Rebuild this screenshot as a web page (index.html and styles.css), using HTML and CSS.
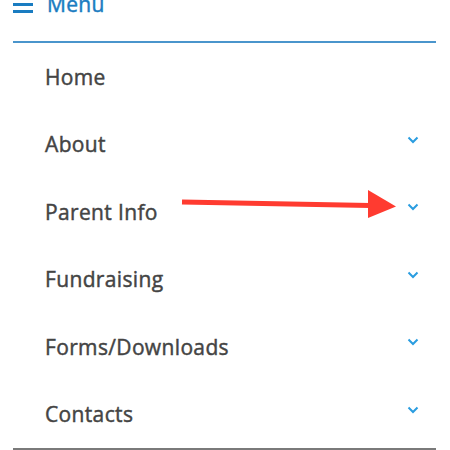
FILE: index.html
```html
<!DOCTYPE html>
<html>
<head>
<meta charset="utf-8">
<link rel="stylesheet" href="styles.css">
</head>
<body>
<nav class="nav">
  <div class="menu-head">
    <span class="burger"><span></span><span></span><span></span></span>
    <span class="menu-label">Menu</span>
  </div>
  <ul class="menu-list">
    <li class="item"><span class="label">Home</span></li>
    <li class="item"><span class="label">About</span><span class="chev"><svg width="12" height="8" viewBox="0 0 12 8"><path d="M1.5 1.5 L6 6 L10.5 1.5" fill="none" stroke="#2a9de0" stroke-width="2"/></svg></span></li>
    <li class="item"><span class="label">Parent Info</span><span class="chev"><svg width="12" height="8" viewBox="0 0 12 8"><path d="M1.5 1.5 L6 6 L10.5 1.5" fill="none" stroke="#2a9de0" stroke-width="2"/></svg></span></li>
    <li class="item"><span class="label">Fundraising</span><span class="chev"><svg width="12" height="8" viewBox="0 0 12 8"><path d="M1.5 1.5 L6 6 L10.5 1.5" fill="none" stroke="#2a9de0" stroke-width="2"/></svg></span></li>
    <li class="item"><span class="label">Forms/Downloads</span><span class="chev"><svg width="12" height="8" viewBox="0 0 12 8"><path d="M1.5 1.5 L6 6 L10.5 1.5" fill="none" stroke="#2a9de0" stroke-width="2"/></svg></span></li>
    <li class="item"><span class="label">Contacts</span><span class="chev"><svg width="12" height="8" viewBox="0 0 12 8"><path d="M1.5 1.5 L6 6 L10.5 1.5" fill="none" stroke="#2a9de0" stroke-width="2"/></svg></span></li>
  </ul>
</nav>
<svg class="arrow" width="230" height="40" viewBox="0 0 230 40">
  <path d="M2 14 L190 17.5" stroke="#ff3b30" stroke-width="5" fill="none"/>
  <path d="M188 2 L216 18.5 L188 30 Z" fill="#ff3b30"/>
</svg>
</body>
</html>
```

FILE: styles.css
```css
html, body {
  margin: 0;
  padding: 0;
  background: #ffffff;
  overflow: hidden;
}
body {
  font-family: "Open Sans", "Noto Sans", sans-serif;
  width: 450px;
  height: 450px;
  position: relative;
}
.nav {
  margin: 0 14px 0 13px;
}
.menu-head {
  display: flex;
  align-items: flex-start;
  gap: 14px;
  margin-top: -10px;
  height: 53px;
  border-bottom: 2px solid #4a95cc;
  box-sizing: border-box;
}
.burger {
  display: flex;
  flex-direction: column;
  gap: 4px;
  width: 20px;
  margin-top: 6px;
}
.burger span {
  display: block;
  height: 3px;
  background: #1a7cc1;
}
.menu-label {
  color: #1a7cc1;
  font-size: 21px;
  font-weight: 400;
  line-height: 28px;
  letter-spacing: 0.3px;
  -webkit-text-stroke: 0.45px #1a7cc1;
}
.menu-list {
  list-style: none;
  margin: 0;
  padding: 0;
  border-bottom: 2px solid #7a7a7a;
}
.item {
  height: 67.5px;
  display: flex;
  align-items: center;
  justify-content: space-between;
  padding: 0 17px 0 32px;
}
.label {
  font-size: 21px;
  font-weight: 400;
  color: #444444;
  letter-spacing: 0.35px;
  -webkit-text-stroke: 0.45px #444444;
}
.chev {
  display: flex;
  margin-top: -9px;
}
.arrow {
  position: absolute;
  left: 180px;
  top: 188px;
}
```
